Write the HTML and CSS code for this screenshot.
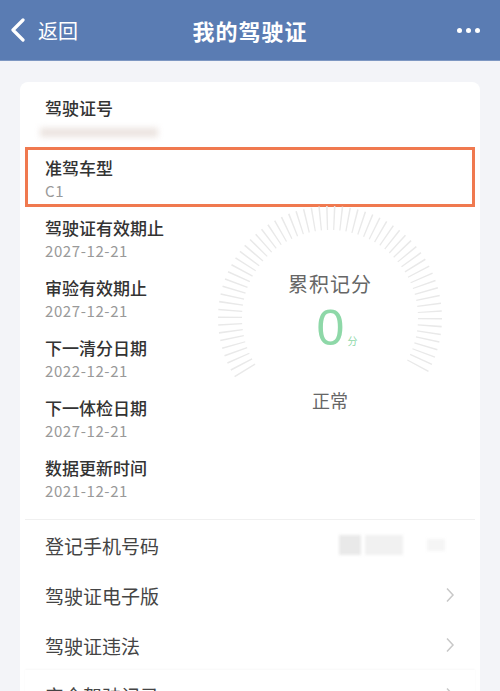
FILE: index.html
```html
<!DOCTYPE html>
<html lang="zh-CN">

<head>
    <meta charset="UTF-8">
    <title>我的驾驶证</title>
    <link rel="stylesheet" href="styles.css">
</head>

<body>

    <div class="nav">
        <div class="nav-back">
            <svg width="16" height="24" viewBox="0 0 16 24"><polyline points="13,2 3,12 13,22" fill="none" stroke="#fff" stroke-width="3.2" stroke-linecap="round" stroke-linejoin="round"/></svg>
            <span>返回</span>
        </div>
        <div class="nav-title">我的驾驶证</div>
        <div class="nav-more"><i></i><i></i><i></i></div>
    </div>

    <div class="card">
        <div class="info">
            <div class="item wide">
                <div class="label">驾驶证号</div>
                <div class="value"><span class="blur-num"></span></div>
            </div>
            <div class="item wide hl">
                <div class="label">准驾车型</div>
                <div class="value">C1</div>
            </div>
            <div class="item">
                <div class="label">驾驶证有效期止</div>
                <div class="value">2027-12-21</div>
            </div>
            <div class="gauge">
                <svg class="ticks" width="230" height="230" viewBox="0 0 230 230">
                    <path d="M30.2 168 A100 100 0 1 1 199.8 168" pathLength="61" fill="none" stroke="#e9e9e9" stroke-width="24" stroke-dasharray="0.2 0.8"/>
                </svg>
                <div class="score">
                    <div class="score-title">累积记分</div>
                    <div class="score-num">0<small>分</small></div>
                    <div class="score-state">正常</div>
                </div>
            </div>
            <div class="item">
                <div class="label">审验有效期止</div>
                <div class="value">2027-12-21</div>
            </div>
            <div class="item">
                <div class="label">下一清分日期</div>
                <div class="value">2022-12-21</div>
            </div>
            <div class="item">
                <div class="label">下一体检日期</div>
                <div class="value">2027-12-21</div>
            </div>
            <div class="item">
                <div class="label">数据更新时间</div>
                <div class="value">2021-12-21</div>
            </div>
        </div>

        <div class="list">
            <div class="row">
                <span>登记手机号码</span>
                <div class="phone"><i class="b1"></i><i class="b2"></i><i class="b3"></i></div>
            </div>
            <div class="row">
                <span>驾驶证电子版</span>
                <svg class="arrow" width="10" height="16" viewBox="0 0 10 16"><polyline points="2,1.5 8,8 2,14.5" fill="none" stroke="#c8c8c8" stroke-width="1.5"/></svg>
            </div>
            <div class="row">
                <span>驾驶证违法</span>
                <svg class="arrow" width="10" height="16" viewBox="0 0 10 16"><polyline points="2,1.5 8,8 2,14.5" fill="none" stroke="#c8c8c8" stroke-width="1.5"/></svg>
            </div>
            <div class="row last">
                <span>安全驾驶记录</span>
                <svg class="arrow" width="10" height="16" viewBox="0 0 10 16"><polyline points="2,1.5 8,8 2,14.5" fill="none" stroke="#c8c8c8" stroke-width="1.5"/></svg>
            </div>
        </div>
    </div>

</body>

</html>
```

FILE: styles.css
```css
body {
    margin: 0;
    background: #f3f4f8;
    font-family: "Noto Sans CJK SC", "Noto Sans", sans-serif;
    color: #333;
    overflow: hidden;
}

/* 顶部导航 */
.nav {
    height: 60px;
    background: #5a7cb3;
    border-bottom: 1px solid #7d97c2;
    display: flex;
    align-items: center;
    justify-content: space-between;
    padding: 0 20px 0 10px;
    color: #fff;
}

.nav-back {
    display: flex;
    align-items: center;
    gap: 12px;
    width: 110px;
    font-size: 20px;
}

.nav-title {
    font-size: 22px;
    font-weight: 700;
    letter-spacing: 1px;
}

.nav-more {
    width: 100px;
    display: flex;
    justify-content: flex-end;
    gap: 4px;
}

.nav-more i {
    width: 5px;
    height: 5px;
    border-radius: 50%;
    background: #fff;
}

/* 卡片 */
.card {
    margin: 21px 20px 0;
    background: #fff;
    border-radius: 8px;
    padding: 5px 5px 0;
}

.info {
    display: grid;
    grid-template-columns: 180px 1fr;
    padding-bottom: 12px;
    border-bottom: 1px solid #f0f0f0;
}

.item {
    grid-column: 1;
    height: 60px;
    box-sizing: border-box;
    padding: 8px 0 0 20px;
}

.item.wide {
    grid-column: 1 / 3;
}

.item.hl {
    border: 3px solid #f0794f;
    padding: 5px 0 0 17px;
}

.label {
    font-size: 17px;
    font-weight: 500;
    line-height: 26px;
    color: #333;
}

.value {
    font-size: 15px;
    line-height: 20px;
    color: #999;
    letter-spacing: 0.6px;
}

.blur-num {
    display: inline-block;
    width: 118px;
    height: 9px;
    margin-top: 6px;
    margin-left: -5px;
    background: #ebe3df;
    filter: blur(3px);
}

/* 记分仪表 */
.gauge {
    grid-column: 2;
    grid-row: 3 / 8;
    position: relative;
    width: 230px;
    height: 230px;
    margin: -4px 0 0 10px;
}

.ticks {
    position: absolute;
    left: 0;
    top: 0;
}

.score {
    position: relative;
    display: flex;
    flex-direction: column;
    align-items: center;
    padding-top: 66px;
}

.score-title {
    font-size: 20px;
    line-height: 29px;
    color: #666;
    letter-spacing: 1px;
}

.score-num {
    font-family: "Liberation Sans", Arial, sans-serif;
    font-size: 50px;
    line-height: 56px;
    margin-top: 2px;
    color: #8ed8a8;
    margin-left: 14px;
}

.score-num small {
    font-family: "Noto Sans CJK SC", sans-serif;
    font-size: 10px;
    margin-left: 3px;
}

.score-state {
    margin-top: 18px;
    font-size: 18px;
    color: #666;
}

/* 列表 */
.row {
    height: 50px;
    display: flex;
    align-items: center;
    justify-content: space-between;
    padding: 0 20px 0 20px;
    font-size: 19px;
    color: #444;
}

.row.last {
    box-shadow: 0 -1px 2px rgba(0, 0, 0, 0.03);
}

.phone {
    display: flex;
    align-items: center;
    gap: 4px;
    margin-right: 10px;
}

.phone i {
    display: block;
    height: 20px;
    background: #e9e9e9;
    filter: blur(1.5px);
}

.phone .b1 {
    width: 22px;
}

.phone .b2 {
    width: 38px;
    background: #f1f1f1;
}

.phone .b3 {
    width: 18px;
    height: 12px;
    margin-left: 20px;
    background: #f5f5f5;
}
```
